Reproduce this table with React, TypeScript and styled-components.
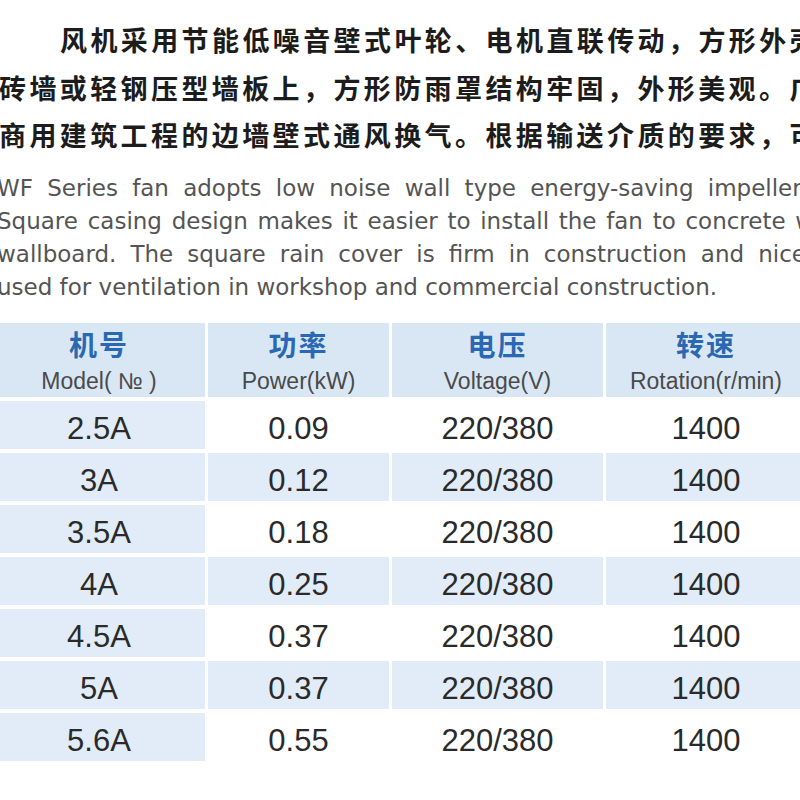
import React from "react";
import styled, { createGlobalStyle } from "styled-components";

const GlobalStyle = createGlobalStyle`
  html, body {
    margin: 0;
    padding: 0;
    background: #ffffff;
  }
  body {
    font-family: "Liberation Sans", Arial, sans-serif;
  }
`;

const Page = styled.div`
  width: 800px;
  height: 800px;
  overflow: hidden;
  background: #ffffff;
`;

const IntroCn = styled.div`
  padding-top: 16px;
  margin-left: -1px;
  font-family: "Noto Sans CJK SC", "Noto Sans", sans-serif;
  font-size: 27px;
  font-weight: 700;
  letter-spacing: 3.4px;
  line-height: 47.5px;
  color: #1c1c1c;
`;

const CnLine = styled.div<{ $indent?: number }>`
  white-space: nowrap;
  padding-left: ${(p) => p.$indent ?? 0}px;
`;

const IntroEn = styled.div`
  margin-top: 13px;
  margin-left: -3px;
  font-family: "DejaVu Sans", "Liberation Sans", sans-serif;
  font-size: 23px;
  line-height: 33.3px;
  color: #545454;
`;

const EnLine = styled.div<{ $justify?: boolean; $width?: number }>`
  width: ${(p) => p.$width ?? 844}px;
  white-space: ${(p) => (p.$justify ? "normal" : "nowrap")};
  text-align: ${(p) => (p.$justify ? "justify" : "left")};
  text-align-last: ${(p) => (p.$justify ? "justify" : "left")};
`;

const SpecTable = styled.div`
  margin-top: 18px;
  margin-left: -7px;
  display: grid;
  grid-template-columns: 212px 181px 211px 200px;
  grid-template-rows: 74px;
  grid-auto-rows: 48px;
  gap: 4px 3px;
`;

const HeaderCell = styled.div`
  background: #d9e7f5;
  display: flex;
  flex-direction: column;
  align-items: center;
  padding-top: 5px;
  box-sizing: border-box;
`;

const CnLabel = styled.div`
  font-family: "Noto Sans CJK SC", "Noto Sans", sans-serif;
  font-size: 28px;
  font-weight: 700;
  letter-spacing: 2px;
  line-height: 32px;
  color: #2a68b3;
`;

const EnLabel = styled.div`
  margin-top: 6px;
  font-family: "Liberation Sans", Arial, sans-serif;
  font-size: 23px;
  line-height: 30px;
  color: #4a4a4a;
  white-space: nowrap;
`;

const DataCell = styled.div<{ $shaded: boolean }>`
  background: ${(p) => (p.$shaded ? "#e1ecf8" : "#ffffff")};
  display: flex;
  align-items: center;
  justify-content: center;
  padding-top: 9px;
  box-sizing: border-box;
  font-family: "Liberation Sans", Arial, sans-serif;
  font-size: 31px;
  color: #2a2a2a;
`;

const headers = [
  { cn: "机号", en: "Model( № )" },
  { cn: "功率", en: "Power(kW)" },
  { cn: "电压", en: "Voltage(V)" },
  { cn: "转速", en: "Rotation(r/min)" },
];

const rows: [string, string, string, string][] = [
  ["2.5A", "0.09", "220/380", "1400"],
  ["3A", "0.12", "220/380", "1400"],
  ["3.5A", "0.18", "220/380", "1400"],
  ["4A", "0.25", "220/380", "1400"],
  ["4.5A", "0.37", "220/380", "1400"],
  ["5A", "0.37", "220/380", "1400"],
  ["5.6A", "0.55", "220/380", "1400"],
];

export default function App() {
  return (
    <>
      <GlobalStyle />
      <Page>
        <IntroCn>
          <CnLine $indent={61}>风机采用节能低噪音壁式叶轮、电机直联传动，方形外壳</CnLine>
          <CnLine>砖墙或轻钢压型墙板上，方形防雨罩结构牢固，外形美观。广</CnLine>
          <CnLine>商用建筑工程的边墙壁式通风换气。根据输送介质的要求，可</CnLine>
        </IntroCn>
        <IntroEn>
          <EnLine $justify $width={812}>WF Series fan adopts low noise wall type energy-saving impeller,</EnLine>
          <EnLine $justify>Square casing design makes it easier to install the fan to concrete wall</EnLine>
          <EnLine $justify>wallboard. The square rain cover is firm in construction and nice in</EnLine>
          <EnLine>used for ventilation in workshop and commercial construction.</EnLine>
        </IntroEn>
        <SpecTable>
          {headers.map((h) => (
            <HeaderCell key={h.cn}>
              <CnLabel>{h.cn}</CnLabel>
              <EnLabel>{h.en}</EnLabel>
            </HeaderCell>
          ))}
          {rows.map((r, i) =>
            r.map((v, j) => (
              <DataCell key={`${i}-${j}`} $shaded={j === 0 || i % 2 === 1}>
                {v}
              </DataCell>
            ))
          )}
        </SpecTable>
      </Page>
    </>
  );
}
